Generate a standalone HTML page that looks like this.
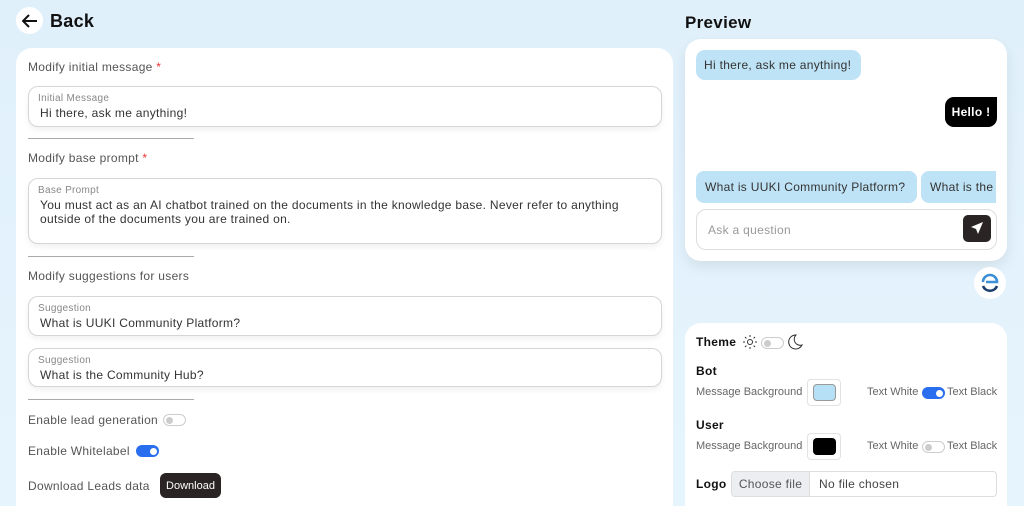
<!DOCTYPE html><html><head><style>
*{box-sizing:border-box;margin:0;padding:0}
html,body{width:1024px;height:506px;overflow:hidden}
body{background:linear-gradient(#e0f0fb,#e6f4fd);font-family:"Liberation Sans",sans-serif;color:#444;position:relative;letter-spacing:.3px}
.a{position:absolute}
.card{background:#fff;border-radius:16px}
.lbl{font-size:12px;color:#555}
.field{border:1px solid #d6d6d6;border-radius:10px;background:#fff;box-shadow:0 3px 6px rgba(0,0,0,.06)}
.field .s{position:absolute;left:9px;top:6px;font-size:10px;color:#888}
.field .v{position:absolute;left:11px;top:19px;font-size:12px;color:#333;line-height:14px;white-space:nowrap}
.line{height:1px;background:#aaa;width:166px;left:28px}
.tog{width:23px;height:12px;border-radius:6px;border:1px solid #ccc;background:#fff}
.tog:after{content:"";position:absolute;left:2px;top:2px;width:7px;height:7px;border-radius:50%;background:#ccc}
.on{background:#2a6ef0;border-color:#2a6ef0}
.on:after{left:13px;background:#fff}
.req{color:#e33}
</style></head><body>
<div class="a" style="left:16px;top:7px;width:27px;height:27px;border-radius:50%;background:#fff"></div>
<svg class="a" style="left:22px;top:14px" width="16" height="14" viewBox="0 0 16 14"><path d="M15 7H2M7 1L1 7l6 6" stroke="#111" stroke-width="2" fill="none"/></svg>
<div class="a" style="left:50px;top:11px;font-size:18px;font-weight:bold;color:#111">Back</div>
<div class="a" style="left:685px;top:13px;font-size:17px;font-weight:bold;color:#111">Preview</div>

<div class="a card" style="left:16px;top:48px;width:657px;height:458px;border-radius:16px 16px 0 0"></div>
<div class="a lbl" style="left:28px;top:60px">Modify initial message <span class="req">*</span></div>
<div class="a field" style="left:28px;top:86px;width:634px;height:41px"><span class="s">Initial Message</span><span class="v">Hi there, ask me anything!</span></div>
<div class="a line" style="top:138px"></div>
<div class="a lbl" style="left:28px;top:151px">Modify base prompt <span class="req">*</span></div>
<div class="a field" style="left:28px;top:178px;width:634px;height:66px"><span class="s">Base Prompt</span><span class="v">You must act as an AI chatbot trained on the documents in the knowledge base. Never refer to anything<br>outside of the documents you are trained on.</span></div>
<div class="a line" style="top:256px"></div>
<div class="a lbl" style="left:28px;top:269px">Modify suggestions for users</div>
<div class="a field" style="left:28px;top:296px;width:634px;height:40px"><span class="s">Suggestion</span><span class="v">What is UUKI Community Platform?</span></div>
<div class="a field" style="left:28px;top:348px;width:634px;height:39px"><span class="s">Suggestion</span><span class="v">What is the Community Hub?</span></div>
<div class="a line" style="top:399px"></div>
<div class="a lbl" style="left:28px;top:413px">Enable lead generation</div>
<div class="a tog" style="left:163px;top:414px"></div>
<div class="a lbl" style="left:28px;top:444px">Enable Whitelabel</div>
<div class="a tog on" style="left:136px;top:445px"></div>
<div class="a lbl" style="left:28px;top:479px">Download Leads data</div>
<div class="a" style="left:160px;top:473px;width:61px;height:25px;border-radius:6px;background:#2b2424;color:#fff;font-size:11px;display:flex;align-items:center;justify-content:center;letter-spacing:0">Download</div>

<div class="a card" style="left:685px;top:39px;width:322px;height:222px;box-shadow:0 6px 14px rgba(0,0,0,.08)"></div>
<div class="a" style="left:696px;top:50px;width:165px;height:30px;border-radius:9px;background:#bfe3f6;font-size:12px;color:#333;line-height:30px;padding-left:8px;white-space:nowrap">Hi there, ask me anything!</div>
<div class="a" style="left:945px;top:97px;width:52px;height:30px;border-radius:9px 0 9px 9px;background:#000;color:#fff;font-size:12px;font-weight:bold;line-height:30px;text-align:center">Hello !</div>
<div class="a" style="left:696px;top:171px;width:221px;height:32px;border-radius:8px;background:#bfe3f6;font-size:12px;color:#333;line-height:32px;padding-left:9px;white-space:nowrap">What is UUKI Community Platform?</div>
<div class="a" style="left:921px;top:171px;width:75px;height:32px;border-radius:8px 0 0 8px;background:#bfe3f6;font-size:12px;color:#333;line-height:32px;padding-left:9px;overflow:hidden;white-space:nowrap">What is the</div>
<div class="a" style="left:696px;top:209px;width:301px;height:41px;border:1px solid #ddd;border-radius:10px;background:#fff"></div>
<div class="a" style="left:708px;top:223px;font-size:12px;color:#999">Ask a question</div>
<div class="a" style="left:963px;top:215px;width:28px;height:27px;border-radius:5px;background:#2b2424"></div>
<svg class="a" style="left:970px;top:221px" width="14" height="14" viewBox="0 0 14 14"><path d="M13 1L1 6l5 2 2 5z" fill="#fff"/></svg>
<div class="a" style="left:974px;top:267px;width:32px;height:32px;border-radius:50%;background:#fff"></div>
<svg class="a" style="left:980px;top:273px" width="20" height="20" viewBox="0 0 20 20"><path d="M3 9a7 7 0 0 1 14 0H6" stroke="#3b8fd6" stroke-width="2.6" fill="none"/><path d="M3 13a7.5 7.5 0 0 0 14 0" stroke="#1d3f6e" stroke-width="2.6" fill="none"/></svg>

<div class="a card" style="left:685px;top:323px;width:322px;height:183px;border-radius:16px 16px 0 0"></div>
<div class="a" style="left:696px;top:335px;font-size:12px;font-weight:bold;color:#111">Theme</div>
<svg class="a" style="left:743px;top:335px" width="14" height="14" viewBox="0 0 14 14"><circle cx="7" cy="7" r="2.5" stroke="#333" fill="none"/><path d="M7 0v2M7 12v2M0 7h2M12 7h2M2 2l1.4 1.4M10.6 10.6L12 12M2 12l1.4-1.4M10.6 3.4L12 2" stroke="#333"/></svg>
<div class="a tog" style="left:761px;top:337px"></div>
<svg class="a" style="left:787px;top:334px" width="16" height="16" viewBox="0 0 16 16"><path d="M9 1a7 7 0 1 0 6 10A6 6 0 0 1 9 1z" stroke="#333" fill="none"/></svg>
<div class="a" style="left:696px;top:364px;font-size:12px;font-weight:bold;color:#111">Bot</div>
<div class="a" style="left:696px;top:386px;font-size:11px;color:#666;letter-spacing:0">Message Background</div>
<div class="a" style="left:807px;top:379px;width:34px;height:27px;border:1px solid #e2e2e2;border-radius:4px;background:#fff"></div>
<div class="a" style="left:813px;top:384px;width:23px;height:17px;border-radius:4px;background:#b5e0f5;border:1px solid #999"></div>
<div class="a" style="left:867px;top:386px;font-size:11px;color:#666;letter-spacing:0">Text White</div>
<div class="a tog on" style="left:922px;top:387px"></div>
<div class="a" style="left:947px;top:386px;font-size:11px;color:#666;letter-spacing:0">Text Black</div>
<div class="a" style="left:696px;top:418px;font-size:12px;font-weight:bold;color:#111">User</div>
<div class="a" style="left:696px;top:440px;font-size:11px;color:#666;letter-spacing:0">Message Background</div>
<div class="a" style="left:807px;top:433px;width:34px;height:27px;border:1px solid #e2e2e2;border-radius:4px;background:#fff"></div>
<div class="a" style="left:813px;top:438px;width:23px;height:17px;border-radius:4px;background:#000"></div>
<div class="a" style="left:867px;top:440px;font-size:11px;color:#666;letter-spacing:0">Text White</div>
<div class="a tog" style="left:922px;top:441px"></div>
<div class="a" style="left:947px;top:440px;font-size:11px;color:#666;letter-spacing:0">Text Black</div>
<div class="a" style="left:696px;top:477px;font-size:12px;font-weight:bold;color:#111">Logo</div>
<div class="a" style="left:731px;top:471px;width:266px;height:26px;border:1px solid #ddd;border-radius:4px;background:#fff;overflow:hidden">
<div style="position:absolute;left:0;top:0;width:78px;height:26px;background:#eceef1;border-right:1px solid #ddd;font-size:12px;color:#555;line-height:24px;text-align:center">Choose file</div>
<div style="position:absolute;left:87px;top:0;font-size:12px;color:#444;line-height:24px">No file chosen</div></div>
</body></html>
